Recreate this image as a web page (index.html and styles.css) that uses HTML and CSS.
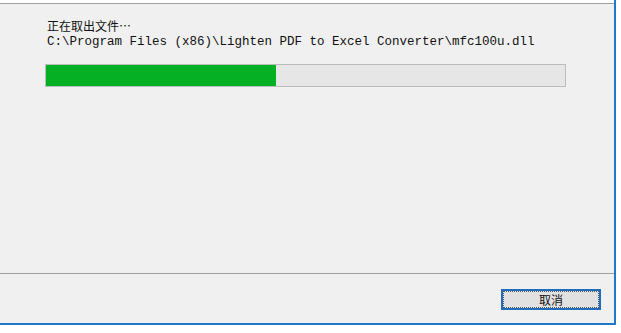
FILE: index.html
```html
<!DOCTYPE html>
<html lang="zh-CN">
<head>
    <meta charset="UTF-8">
    <title>正在取出文件</title>
    <link rel="stylesheet" href="styles.css">
</head>
<body>
    <div class="window">
        <div class="top-edge"></div>
        <div class="content">
            <div class="status">正在取出文件…</div>
            <div class="path">C:\Program Files (x86)\Lighten PDF to Excel Converter\mfc100u.dll</div>
            <div class="progress">
                <div class="progress-fill" style="width: 44.3%"></div>
            </div>
        </div>
        <div class="footer">
            <button class="cancel" type="button"><span class="focus-ring">取消</span></button>
        </div>
    </div>
</body>
</html>
```

FILE: styles.css
```css
body {
    margin: 0;
    background: #ffffff;
    font-family: "Noto Sans CJK SC", "Liberation Sans", sans-serif;
    color: #111111;
}
.window {
    width: 614px;
    height: 323px;
    border-right: 2px solid #1f78c8;
    border-bottom: 2px solid #1f78c8;
    background: #f0f0f0;
    display: flex;
    flex-direction: column;
}
.top-edge {
    height: 3px;
    background: #ffffff;
    border-bottom: 1px solid #a0a0a0;
}
.content {
    height: 270px;
    padding: 14px 48px 0 45px;
    box-sizing: border-box;
    border-bottom: 1px solid #a0a0a0;
}
.status {
    font-size: 12px;
    line-height: 15px;
    padding-left: 2px;
}
.path {
    font-family: "Liberation Mono", "DejaVu Sans Mono", monospace;
    font-size: 12.5px;
    line-height: 15px;
    margin-top: 2px;
    padding-left: 2px;
}
.progress {
    margin-top: 14px;
    height: 21px;
    border: 1px solid #bcbcbc;
    background: #e6e6e6;
}
.progress-fill {
    height: 100%;
    background: #06b025;
}
.footer {
    flex: 1;
    display: flex;
    justify-content: flex-end;
    align-items: flex-start;
    padding: 15px 13px 0 0;
}
.cancel {
    width: 100px;
    height: 21px;
    padding: 1px;
    border: 2px solid #1f6cbd;
    background: #e1e1e1;
    font-family: "Noto Sans CJK SC", sans-serif;
    font-size: 12px;
    color: #111111;
    display: flex;
}
.focus-ring {
    flex: 1;
    display: flex;
    align-items: center;
    justify-content: center;
    outline: 1px dotted #5a5a5a;
    line-height: 1;
}
```
